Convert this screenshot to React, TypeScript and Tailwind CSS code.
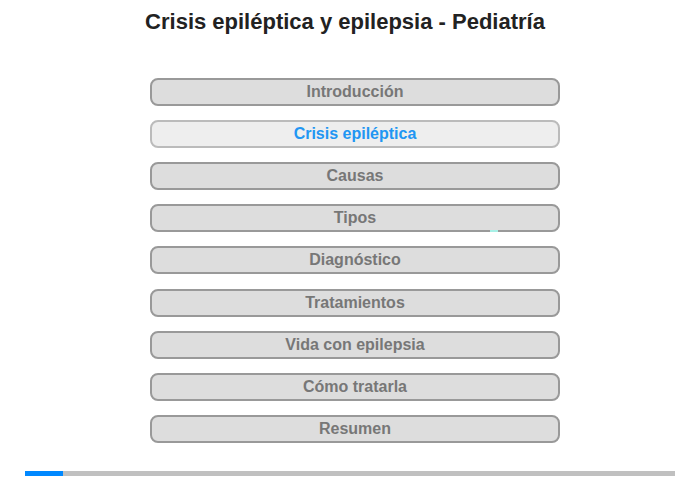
import React from 'react';

const items = [
  'Introducción',
  'Crisis epiléptica',
  'Causas',
  'Tipos',
  'Diagnóstico',
  'Tratamientos',
  'Vida con epilepsia',
  'Cómo tratarla',
  'Resumen',
];

const active = 1;

export default function App() {
  return (
    <div className="relative w-[700px] h-[480px] bg-white font-['Liberation_Sans',Arial,sans-serif] overflow-hidden">
      {/* Title */}
      <h1 className="pt-[8px] pr-[10px] text-center text-[22px] leading-[28px] font-bold text-[#222]">
        Crisis epiléptica y epilepsia - Pediatría
      </h1>

      {/* Menu */}
      <div className="mt-[42px] pl-[10px] flex flex-col items-center gap-[14.12px]">
        {items.map((label, i) => (
          <button
            key={label}
            className={`w-[410px] h-[28px] rounded-[8px] border-2 text-[16px] leading-[24px] font-bold ${
              i === active
                ? 'bg-[#eeeeee] border-[#bbbbbb] text-[#2196f3]'
                : 'bg-[#dddddd] border-[#999999] text-[#777777]'
            }`}
          >
            {label}
          </button>
        ))}
      </div>

      {/* stray mark */}
      <div className="absolute left-[490px] top-[230px] w-[8px] h-[2px] bg-[#a8f0e6]" />

      {/* Progress */}
      <div className="mt-[28px] mx-[25px] h-[5px] bg-[#c0c0c0] flex">
        <div className="w-[38px] h-full bg-[#0088ff]" />
      </div>
    </div>
  );
}
